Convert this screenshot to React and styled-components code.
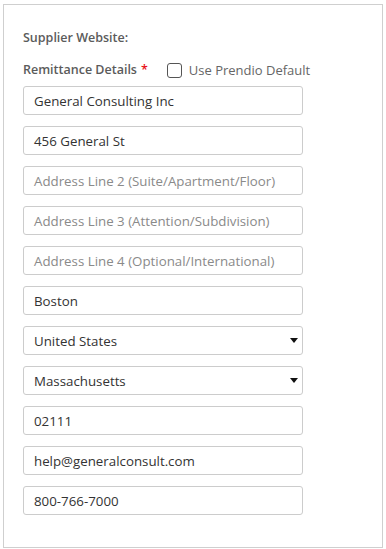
import React from "react";
import styled, { createGlobalStyle } from "styled-components";

const GlobalStyle = createGlobalStyle`
  body {
    margin: 0;
    background: #fff;
    font-family: "Open Sans", "Liberation Sans", sans-serif;
  }
`;

const Panel = styled.div`
  box-sizing: border-box;
  margin: 4px 0 0 3px;
  width: 380px;
  height: 544px;
  border: 1px solid #cfcfcf;
  padding: 24px 0 0 19px;
`;

const Label = styled.div`
  font-size: 12.5px;
  font-weight: 600;
  color: #5b5b5b;
  line-height: 18px;
`;

const LabelRow = styled.div`
  display: flex;
  align-items: center;
  margin-top: 14px;
  margin-bottom: 7px;
  height: 18px;
`;

const Star = styled.span`
  color: #e8141b;
  margin-left: 4px;
`;

const CheckLabel = styled.label`
  display: flex;
  align-items: center;
  margin-left: 19px;
  font-size: 13px;
  color: #666;
  gap: 7px;
`;

const CheckBox = styled.span`
  box-sizing: border-box;
  width: 15px;
  height: 15px;
  border: 1px solid #555;
  border-radius: 3px;
  background: #fff;
`;

const Fields = styled.div`
  display: flex;
  flex-direction: column;
  gap: 11px;
  width: 280px;
`;

const Field = styled.div`
  box-sizing: border-box;
  height: 29px;
  border: 1px solid #cccccc;
  border-radius: 3px;
  display: flex;
  align-items: center;
  justify-content: space-between;
  padding: 0 4px 0 10px;
  font-size: 13.3px;
  color: ${(p) => (p.placeholder ? "#8a8a8a" : "#333")};
`;

const Arrow = styled.span`
  width: 0;
  height: 0;
  border-left: 4.5px solid transparent;
  border-right: 4.5px solid transparent;
  border-top: 5px solid #111;
`;

const fields = [
  { text: "General Consulting Inc" },
  { text: "456 General St" },
  { text: "Address Line 2 (Suite/Apartment/Floor)", placeholder: true },
  { text: "Address Line 3 (Attention/Subdivision)", placeholder: true },
  { text: "Address Line 4 (Optional/International)", placeholder: true },
  { text: "Boston" },
  { text: "United States", select: true },
  { text: "Massachusetts", select: true },
  { text: "02111" },
  { text: "help@generalconsult.com" },
  { text: "800-766-7000" },
];

export default function App() {
  return (
    <>
      <GlobalStyle />
      <Panel>
        <Label>Supplier Website:</Label>
        <LabelRow>
          <Label>
            Remittance Details<Star>*</Star>
          </Label>
          <CheckLabel>
            <CheckBox />
            Use Prendio Default
          </CheckLabel>
        </LabelRow>
        <Fields>
          {fields.map((f) => (
            <Field key={f.text} placeholder={f.placeholder ? 1 : 0}>
              {f.text}
              {f.select && <Arrow />}
            </Field>
          ))}
        </Fields>
      </Panel>
    </>
  );
}
